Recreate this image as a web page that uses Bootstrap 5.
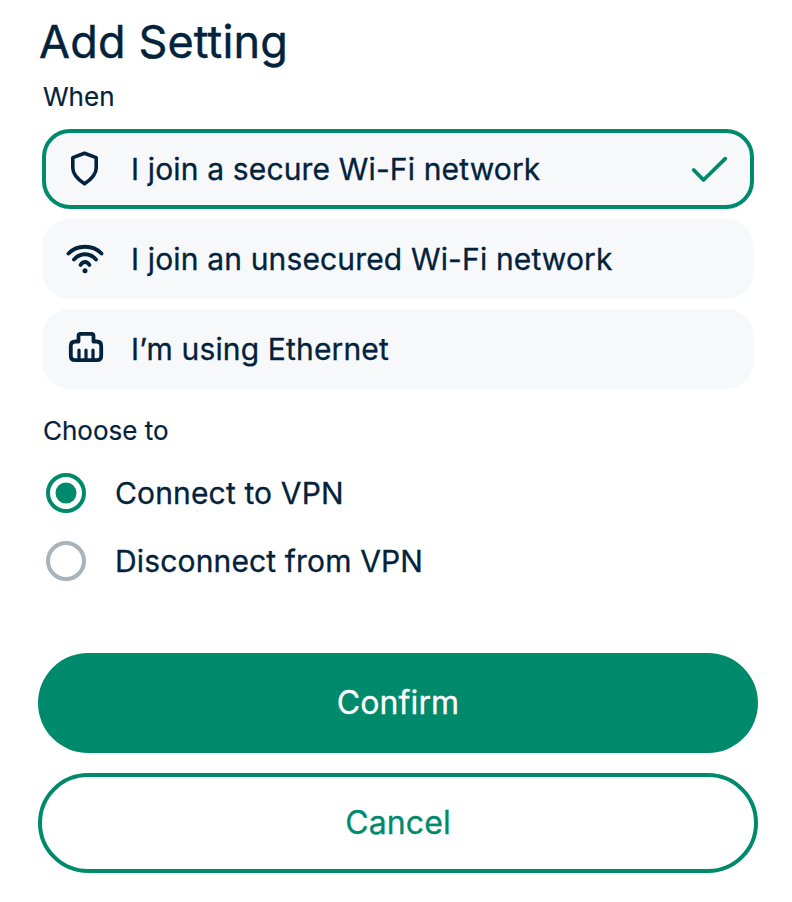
<!DOCTYPE html>
<html lang="en">
<head>
    <meta charset="UTF-8">
    <meta name="viewport" content="width=device-width, initial-scale=1.0">
    <title>Add Setting</title>
    <link href="https://cdn.jsdelivr.net/npm/bootstrap@5.3.0/dist/css/bootstrap.min.css" rel="stylesheet">
    <style>
        body {
            background-color: #fff;
            color: #03223b;
            font-family: "Inter", "Liberation Sans", sans-serif;
            overflow: hidden;
        }

        .sheet {
            width: 792px;
            height: 902px;
            padding: 16px 34px 0 38px;
        }

        .sheet-title {
            font-size: 45px;
            font-weight: 400;
            letter-spacing: .15px;
            -webkit-text-stroke: .45px currentColor;
            line-height: 52px;
            margin: 0 0 0 1px;
        }

        .group-label {
            font-size: 26px;
            -webkit-text-stroke: .2px currentColor;
            line-height: 32px;
            margin: 0 0 0 5px;
        }

        .label-when { margin-top: 13px; }
        .label-choose { margin-top: 26px; }

        .option-list {
            margin: 16px 4px 0 4px;
            gap: 10px;
        }

        .option-row {
            height: 80px;
            background-color: #f6f8fa;
            border-radius: 28px;
            padding: 0 24px;
            font-size: 30px;
            letter-spacing: .15px;
            -webkit-text-stroke: .3px currentColor;
        }

        .option-row.active-row {
            border: 4px solid #008a6c;
            padding: 0 20px;
        }

        .option-icon {
            width: 40px;
            height: 40px;
            margin-right: 25px;
            flex-shrink: 0;
        }

        .radio-list {
            margin: 26px 0 0 8px;
            gap: 28px;
        }

        .radio-row {
            height: 40px;
            font-size: 30px;
            letter-spacing: .15px;
            -webkit-text-stroke: .3px currentColor;
            gap: 29px;
        }

        .radio-dot {
            width: 40px;
            height: 40px;
            flex-shrink: 0;
        }

        .action-btn {
            display: block;
            width: 720px;
            height: 100px;
            border-radius: 50px;
            font-size: 32px;
            font-weight: 400;
            letter-spacing: .1px;
            -webkit-text-stroke: .3px currentColor;
            line-height: 1;
        }

        .btn-confirm {
            margin-top: 72px;
            background-color: #008a6c;
            border: 0;
            color: #fff;
        }

        .btn-abort {
            margin-top: 20px;
            background-color: #fff;
            border: 4px solid #008a6c;
            color: #008a6c;
        }
    </style>
</head>
<body>
<div class="sheet">
    <h1 class="sheet-title">Add Setting</h1>

    <p class="group-label label-when">When</p>
    <div class="option-list d-flex flex-column">
        <div class="option-row active-row d-flex align-items-center">
            <svg class="option-icon" viewBox="0 0 40 40" fill="none" stroke="#03223b" stroke-width="3.600" stroke-linejoin="round">
                <path d="M18.500 4.200 L30.200 8.600 V19 C30.200 26 25 30.500 18.500 34.800 C12 30.500 6.800 26 6.800 19 V8.600 Z"/>
            </svg>
            <span class="flex-grow-1">I join a secure Wi-Fi network</span>
            <svg width="40" height="40" viewBox="0 0 40 40" fill="none" stroke="#008a6c" stroke-width="3.800" stroke-linecap="round" stroke-linejoin="round">
                <path d="M3.700 21 L13.500 31 L35.300 9.700"/>
            </svg>
        </div>
        <div class="option-row d-flex align-items-center">
            <svg class="option-icon" viewBox="0 0 40 40" fill="none" stroke="#03223b" stroke-width="3.800" stroke-linecap="round">
                <path d="M2.500 14.500 C11 5.500 27 5.500 35.500 14.500"/>
                <path d="M8 20.500 C14 13.500 24 13.500 30 20.500"/>
                <path d="M14.500 26 C17 22 21 22 23.500 26"/>
                <circle cx="19" cy="31.700" r="2.500" fill="#03223b" stroke="none"/>
            </svg>
            <span>I join an unsecured Wi-Fi network</span>
        </div>
        <div class="option-row d-flex align-items-center">
            <svg class="option-icon" viewBox="0 0 40 40" fill="none" stroke="#03223b" stroke-width="3.800" stroke-linejoin="round" stroke-linecap="round">
                <path d="M12.500 12.500 V7 Q12.500 4.800 14.700 4.800 H25.300 Q27.500 4.800 27.500 7 V12.500 H30.500 Q35.200 12.500 35.200 17 V27 Q35.200 31.200 31 31.200 H9 Q4.800 31.200 4.800 27 V17 Q4.800 12.500 9.500 12.500 Z"/>
                <path d="M13 21 V30 M20 21 V30 M27 21 V30" stroke-width="3.200"/>
            </svg>
            <span>I’m using Ethernet</span>
        </div>
    </div>

    <p class="group-label label-choose">Choose to</p>
    <div class="radio-list d-flex flex-column">
        <div class="radio-row d-flex align-items-center">
            <svg class="radio-dot" viewBox="0 0 40 40">
                <circle cx="20" cy="20" r="18" fill="none" stroke="#008a6c" stroke-width="4"/>
                <circle cx="20" cy="20" r="10.500" fill="#008a6c"/>
            </svg>
            <span>Connect to VPN</span>
        </div>
        <div class="radio-row d-flex align-items-center">
            <svg class="radio-dot" viewBox="0 0 40 40">
                <circle cx="20" cy="20" r="18" fill="none" stroke="#a8b3ba" stroke-width="4"/>
            </svg>
            <span>Disconnect from VPN</span>
        </div>
    </div>

    <button type="button" class="btn action-btn btn-confirm">Confirm</button>
    <button type="button" class="btn action-btn btn-abort">Cancel</button>
</div>

<script src="https://cdn.jsdelivr.net/npm/bootstrap@5.3.0/dist/js/bootstrap.bundle.min.js"></script>
</body>
</html>
